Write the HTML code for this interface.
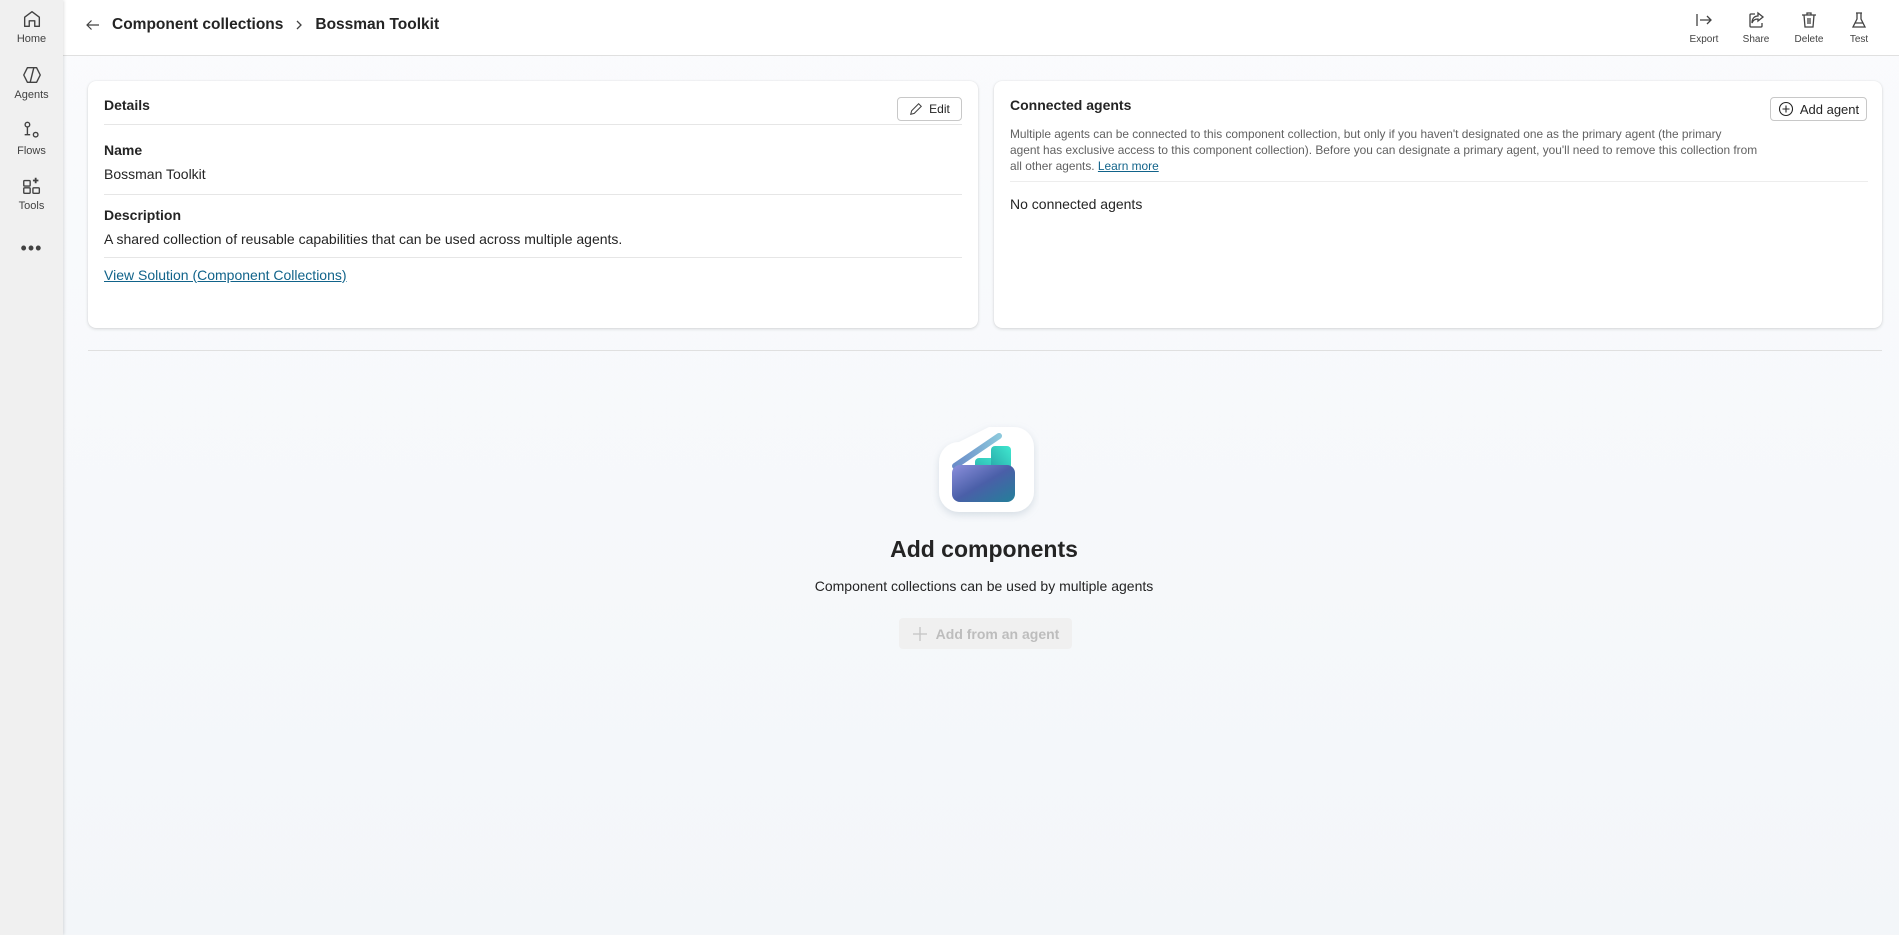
<!DOCTYPE html>
<html><head><meta charset="utf-8"><style>
*{box-sizing:border-box;margin:0;padding:0}
body{width:1899px;height:935px;overflow:hidden;font-family:"Segoe UI","Liberation Sans",sans-serif;color:#242424;background:linear-gradient(180deg,#fafbfd,#f3f6f9);position:relative}
.side{position:absolute;left:0;top:0;width:63px;height:935px;background:#f0f0f0;box-shadow:1px 0 3px rgba(0,0,0,.12);z-index:2}
.nav{position:absolute;left:0;width:63px;text-align:center;font-size:11px;color:#424242}
.nav svg{display:block;margin:0 auto 3px}
.top{position:absolute;left:63px;top:0;right:0;height:56px;background:#fff;border-bottom:1px solid #e0e0e0}
.crumb{position:absolute;left:21px;top:16px;font-size:15.5px;font-weight:700;display:flex;align-items:center;gap:10px}
.act{position:absolute;top:10px;text-align:center;font-size:10px;color:#424242;width:40px;margin-left:-20px}
.act svg{display:block;margin:0 auto 4px}
.card{position:absolute;background:#fff;border-radius:8px;box-shadow:0 1px 3px rgba(0,0,0,.14),0 0 1px rgba(0,0,0,.1)}
.t{position:absolute;font-size:14px}
.hr{position:absolute;height:1px;background:#e6e6e6}
.btn{position:absolute;border:1px solid #c8c8c8;border-radius:4px;font-size:12px;display:flex;align-items:center;justify-content:center;gap:6px;background:#fff}
</style></head><body>
<div class="side">
 <div class="nav" style="top:8px"><svg width="22" height="22" viewBox="0 0 24 24" fill="none" stroke="#424242" stroke-width="1.5"><path d="M4 10l8-6 8 6v10h-5v-6H9v6H4z" stroke-linejoin="round"/></svg>Home</div>
 <div class="nav" style="top:64px"><svg width="22" height="22" viewBox="0 0 24 24" fill="none" stroke="#424242" stroke-width="1.5"><path d="M7 4h10l4 8-4 8H7l-4-8z" stroke-linejoin="round"/><path d="M14 4l-4 16"/></svg>Agents</div>
 <div class="nav" style="top:120px"><svg width="22" height="22" viewBox="0 0 24 24" fill="none" stroke="#424242" stroke-width="1.5"><circle cx="7" cy="5" r="2.5"/><path d="M7 8v8M4 16h6"/><circle cx="16" cy="16" r="2.5"/></svg>Flows</div>
 <div class="nav" style="top:175px"><svg width="22" height="22" viewBox="0 0 24 24" fill="none" stroke="#424242" stroke-width="1.5"><rect x="3" y="6" width="7" height="6" rx="1"/><rect x="3" y="14" width="7" height="6" rx="1"/><rect x="13" y="14" width="7" height="6" rx="1"/><path d="M16 3v6M13 6h6" stroke-width="2"/></svg>Tools</div>
 <div class="nav" style="top:238px;font-size:18px;letter-spacing:1px">•••</div>
</div>
<div class="top">
 <div class="crumb"><svg width="18" height="18" viewBox="0 0 24 24" fill="none" stroke="#424242" stroke-width="1.6"><path d="M20 12H4M10 6l-6 6 6 6"/></svg><span>Component collections</span><svg width="12" height="12" viewBox="0 0 12 12" fill="none" stroke="#424242" stroke-width="1.3"><path d="M4 2l4 4-4 4"/></svg><span>Bossman Toolkit</span></div>
 <div class="act" style="left:1641px"><svg width="20" height="20" viewBox="0 0 20 20" fill="none" stroke="#424242" stroke-width="1.3"><path d="M3 4v12M6 10h11M13 6l4 4-4 4"/></svg>Export</div>
 <div class="act" style="left:1693px"><svg width="20" height="20" viewBox="0 0 20 20" fill="none" stroke="#424242" stroke-width="1.3"><path d="M9 4H5a1 1 0 0 0-1 1v11a1 1 0 0 0 1 1h10a1 1 0 0 0 1-1v-3"/><path d="M12 3l5 4-5 4V9c-3 0-5 1-6 4 0-4 2-7 6-7z"/></svg>Share</div>
 <div class="act" style="left:1746px"><svg width="20" height="20" viewBox="0 0 20 20" fill="none" stroke="#424242" stroke-width="1.3"><path d="M3 5h14M8 5V3h4v2M5 5l1 12h8l1-12M9 8v6M11 8v6"/></svg>Delete</div>
 <div class="act" style="left:1796px"><svg width="20" height="20" viewBox="0 0 20 20" fill="none" stroke="#424242" stroke-width="1.3"><path d="M7 3h6M8 3v6l-4 8h12l-4-8V3M6 13h8"/></svg>Test</div>
</div>

<div class="card" style="left:88px;top:81px;width:890px;height:247px">
 <div class="t" style="left:16px;top:16px;font-weight:600">Details</div>
 <div class="btn" style="left:809px;top:16px;width:65px;height:24px"><svg width="14" height="14" viewBox="0 0 16 16" fill="none" stroke="#424242" stroke-width="1.2"><path d="M2 14l1-4 8-8 3 3-8 8z"/></svg>Edit</div>
 <div class="hr" style="left:16px;top:43px;width:858px"></div>
 <div class="t" style="left:16px;top:61px;font-weight:600">Name</div>
 <div class="t" style="left:16px;top:85px">Bossman Toolkit</div>
 <div class="hr" style="left:16px;top:113px;width:858px"></div>
 <div class="t" style="left:16px;top:126px;font-weight:600">Description</div>
 <div class="t" style="left:16px;top:150px">A shared collection of reusable capabilities that can be used across multiple agents.</div>
 <div class="hr" style="left:16px;top:176px;width:858px"></div>
 <div class="t" style="left:16px;top:186px;text-decoration:underline;color:#11638a">View Solution (Component Collections)</div>
</div>

<div class="card" style="left:994px;top:81px;width:888px;height:247px">
 <div class="t" style="left:16px;top:16px;font-weight:600">Connected agents</div>
 <div class="btn" style="left:776px;top:16px;width:97px;height:24px;font-size:13px"><svg width="16" height="16" viewBox="0 0 16 16" fill="none" stroke="#242424" stroke-width="1.1"><circle cx="8" cy="8" r="6.5"/><path d="M8 4.5v7M4.5 8h7"/></svg>Add agent</div>
 <div class="t" style="left:16px;top:45px;white-space:nowrap;font-size:11.9px;line-height:16px;color:#616161">Multiple agents can be connected to this component collection, but only if you haven't designated one as the primary agent (the primary<br>agent has exclusive access to this component collection). Before you can designate a primary agent, you'll need to remove this collection from<br>all other agents. <span style="color:#11638a;text-decoration:underline">Learn more</span></div>
 <div class="hr" style="left:16px;top:100px;width:858px;background:#ededed"></div>
 <div class="t" style="left:16px;top:115px">No connected agents</div>
</div>

<div class="hr" style="left:88px;top:350px;width:1794px;background:#e0e0e0"></div>

<svg style="position:absolute;left:929px;top:422px" width="110" height="100" viewBox="0 0 110 100">
 <defs>
  <linearGradient id="g1" x1="0" y1="0" x2="1" y2="1"><stop offset="0" stop-color="#8b8fdc"/><stop offset=".5" stop-color="#4a5fa8"/><stop offset="1" stop-color="#23809a"/></linearGradient>
  <linearGradient id="g2" x1="0" y1="0" x2="1" y2="0"><stop offset="0" stop-color="#6a8cc8"/><stop offset="1" stop-color="#8cc8dc"/></linearGradient>
  <linearGradient id="g3" x1="0" y1="1" x2="1" y2="0"><stop offset="0" stop-color="#28a8a8"/><stop offset="1" stop-color="#40e8d0"/></linearGradient>
  <filter id="s" x="-30%" y="-30%" width="160%" height="160%"><feDropShadow dx="0" dy="3" stdDeviation="4" flood-color="#9ab" flood-opacity=".35"/></filter>
 </defs>
 <path d="M30 20 L60 5 H85 a20 20 0 0 1 20 20 V70 a20 20 0 0 1-20 20 H30 a20 20 0 0 1-20-20 V40 a20 20 0 0 1 20-20z" fill="#fff" filter="url(#s)"/>
 <path d="M26 44 L70 14" stroke="url(#g2)" stroke-width="6" stroke-linecap="round"/>
 <rect x="46" y="36" width="28" height="20" rx="4" fill="url(#g3)"/>
 <rect x="62" y="24" width="20" height="24" rx="4" fill="url(#g3)"/>
 <rect x="23" y="43" width="63" height="37" rx="8" fill="url(#g1)"/>
</svg>
<div style="position:absolute;left:0;width:1968px;top:536px;text-align:center;font-size:23px;font-weight:600">Add components</div>
<div style="position:absolute;left:0;width:1968px;top:578px;text-align:center;font-size:14px">Component collections can be used by multiple agents</div>
<div style="position:absolute;left:899px;top:618px;width:173px;height:31px;background:#f0f0f0;border-radius:4px;color:#bdbdbd;font-size:14px;font-weight:600;display:flex;align-items:center;justify-content:center;gap:8px"><svg width="16" height="16" viewBox="0 0 16 16" stroke="#c4c4c4" stroke-width="1.3"><path d="M8 1v14M1 8h14"/></svg>Add from an agent</div>
</body></html>
